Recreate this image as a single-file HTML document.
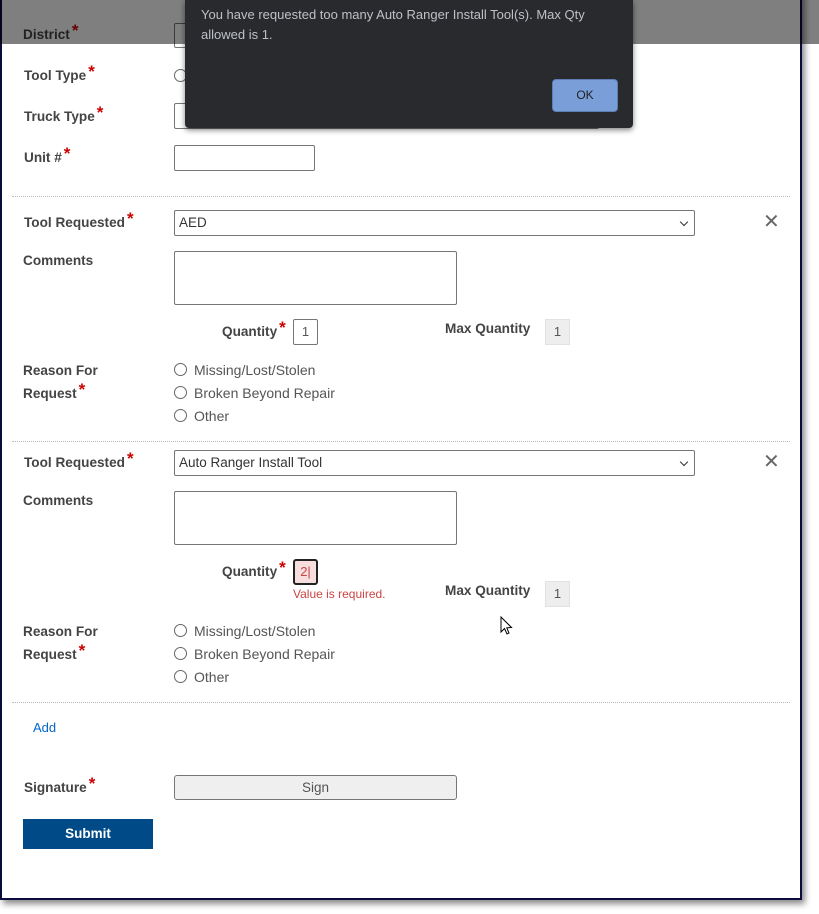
<!DOCTYPE html>
<html><head><meta charset="utf-8"><style>
*{box-sizing:border-box;margin:0;padding:0}
body{width:819px;height:914px;background:#fff;position:relative;overflow:hidden;font-family:"Liberation Sans",Arial,sans-serif}
.frame{position:absolute;left:0;top:-10px;width:802px;height:910px;border:2px solid #0b0b3d;background:#fff;box-shadow:3px 4px 6px rgba(0,0,0,.45)}
.a{position:absolute}
.lbl{position:absolute;font-size:13.6px;font-weight:bold;color:#444;line-height:16px}
.st{color:#c00;font-size:17px;font-weight:bold;position:relative;top:-3px;margin-left:2px}
.box{position:absolute;border:1px solid #767676;border-radius:2px;background:#fff}
.sel{position:absolute;border:1px solid #767676;border-radius:2px;background:#fff;font-size:13.5px;color:#333;padding:5px 4px;line-height:14px}
.sel:after{content:"";position:absolute;right:7px;top:8px;width:5px;height:5px;border-right:1.5px solid #333;border-bottom:1.5px solid #333;transform:rotate(45deg)}
.hr{position:absolute;left:12px;width:778px;border-top:1px dotted #bbb}
.rad{position:absolute;font-size:14px;color:#555;line-height:16px;padding-left:20px}
.rad:before{content:"";position:absolute;left:0;top:1px;width:11px;height:11px;border:1px solid #666;border-radius:50%;background:#fff}
.x{position:absolute;font-size:20px;color:#666;line-height:20px}
.num{position:absolute;font-size:13px;color:#555;text-align:center;line-height:24px}
</style></head><body>
<div class="frame"></div>

<div class="lbl" style="left:23px;top:26px">District<span class="st">*</span></div>
<div class="box" style="left:174px;top:23px;width:300px;height:25px"></div>
<div class="lbl" style="left:24px;top:67px">Tool Type<span class="st">*</span></div>
<div class="rad" style="left:174px;top:68px"></div>
<div class="lbl" style="left:24px;top:108px">Truck Type<span class="st">*</span></div>
<div class="box" style="left:174px;top:103px;width:425px;height:26px"></div>
<div class="lbl" style="left:24px;top:149px">Unit #<span class="st">*</span></div>
<div class="box" style="left:174px;top:145px;width:141px;height:26px"></div>

<div class="hr" style="top:196px"></div>
<div class="lbl" style="left:24px;top:214px">Tool Requested<span class="st">*</span></div>
<div class="sel" style="left:174px;top:210px;width:521px;height:26px">AED</div>
<div class="x" style="left:763px;top:212px">✕</div>
<div class="lbl" style="left:23px;top:253px">Comments</div>
<div class="box" style="left:174px;top:251px;width:283px;height:54px"></div>
<div class="lbl" style="left:222px;top:323px">Quantity<span class="st">*</span></div>
<div class="box num" style="left:293px;top:319px;width:25px;height:26px">1</div>
<div class="lbl" style="left:445px;top:321px">Max Quantity</div>
<div class="num" style="left:545px;top:319px;width:25px;height:26px;background:#eee;border:1px solid #e2e2e2">1</div>
<div class="lbl" style="left:23px;top:360px;line-height:22px">Reason For<br>Request<span class="st">*</span></div>
<div class="rad" style="left:174px;top:362px">Missing/Lost/Stolen</div>
<div class="rad" style="left:174px;top:385px">Broken Beyond Repair</div>
<div class="rad" style="left:174px;top:408px">Other</div>

<div class="hr" style="top:441px"></div>
<div class="lbl" style="left:24px;top:454px">Tool Requested<span class="st">*</span></div>
<div class="sel" style="left:174px;top:450px;width:521px;height:26px">Auto Ranger Install Tool</div>
<div class="x" style="left:763px;top:452px">✕</div>
<div class="lbl" style="left:23px;top:493px">Comments</div>
<div class="box" style="left:174px;top:491px;width:283px;height:54px"></div>
<div class="lbl" style="left:222px;top:563px">Quantity<span class="st">*</span></div>
<div class="num" style="left:293px;top:559px;width:25px;height:26px;background:#f6dede;border:2px solid #222;border-radius:3px;color:#c44;line-height:22px">2|</div>
<div class="a" style="left:293px;top:587px;font-size:12px;color:#c44">Value is required.</div>
<div class="lbl" style="left:445px;top:583px">Max Quantity</div>
<div class="num" style="left:545px;top:581px;width:25px;height:26px;background:#eee;border:1px solid #e2e2e2">1</div>
<div class="lbl" style="left:23px;top:621px;line-height:22px">Reason For<br>Request<span class="st">*</span></div>
<div class="rad" style="left:174px;top:623px">Missing/Lost/Stolen</div>
<div class="rad" style="left:174px;top:646px">Broken Beyond Repair</div>
<div class="rad" style="left:174px;top:669px">Other</div>
<svg class="a" style="left:500px;top:616px" width="14" height="22" viewBox="0 0 14 22"><path d="M1 1 L1 16 L4.5 12.5 L7 18 L9 17 L6.8 11.8 L11.5 11.5 Z" fill="#fff" stroke="#000" stroke-width="1"/></svg>

<div class="hr" style="top:702px"></div>
<div class="a" style="left:33px;top:720px;font-size:13px;color:#0066cc">Add</div>
<div class="lbl" style="left:24px;top:779px">Signature<span class="st">*</span></div>
<div class="a" style="left:174px;top:775px;width:283px;height:25px;background:#efefef;border:1px solid #767676;border-radius:3px;font-size:13.5px;color:#555;text-align:center;line-height:23px">Sign</div>
<div class="a" style="left:23px;top:819px;width:130px;height:30px;background:#004b87;color:#fff;font-size:13.5px;font-weight:bold;text-align:center;line-height:30px">Submit</div>

<div class="a" style="left:0;top:0;width:819px;height:44px;background:rgba(0,0,0,.5)"></div>
<div class="a" style="left:185px;top:0;width:448px;height:128px;background:#292a2d;box-shadow:0 2px 6px rgba(0,0,0,.5);border-radius:0 0 4px 4px">
<div class="a" style="left:16px;top:5px;width:410px;font-size:13px;line-height:20px;color:#bdc1c6">You have requested too many Auto Ranger Install Tool(s). Max Qty allowed is 1.</div>
<div class="a" style="left:367px;top:79px;width:66px;height:33px;background:#7a9fd8;border:1px solid #5d7fb3;border-radius:4px;font-size:12px;color:#202124;text-align:center;line-height:31px">OK</div>
</div>
</body></html>
